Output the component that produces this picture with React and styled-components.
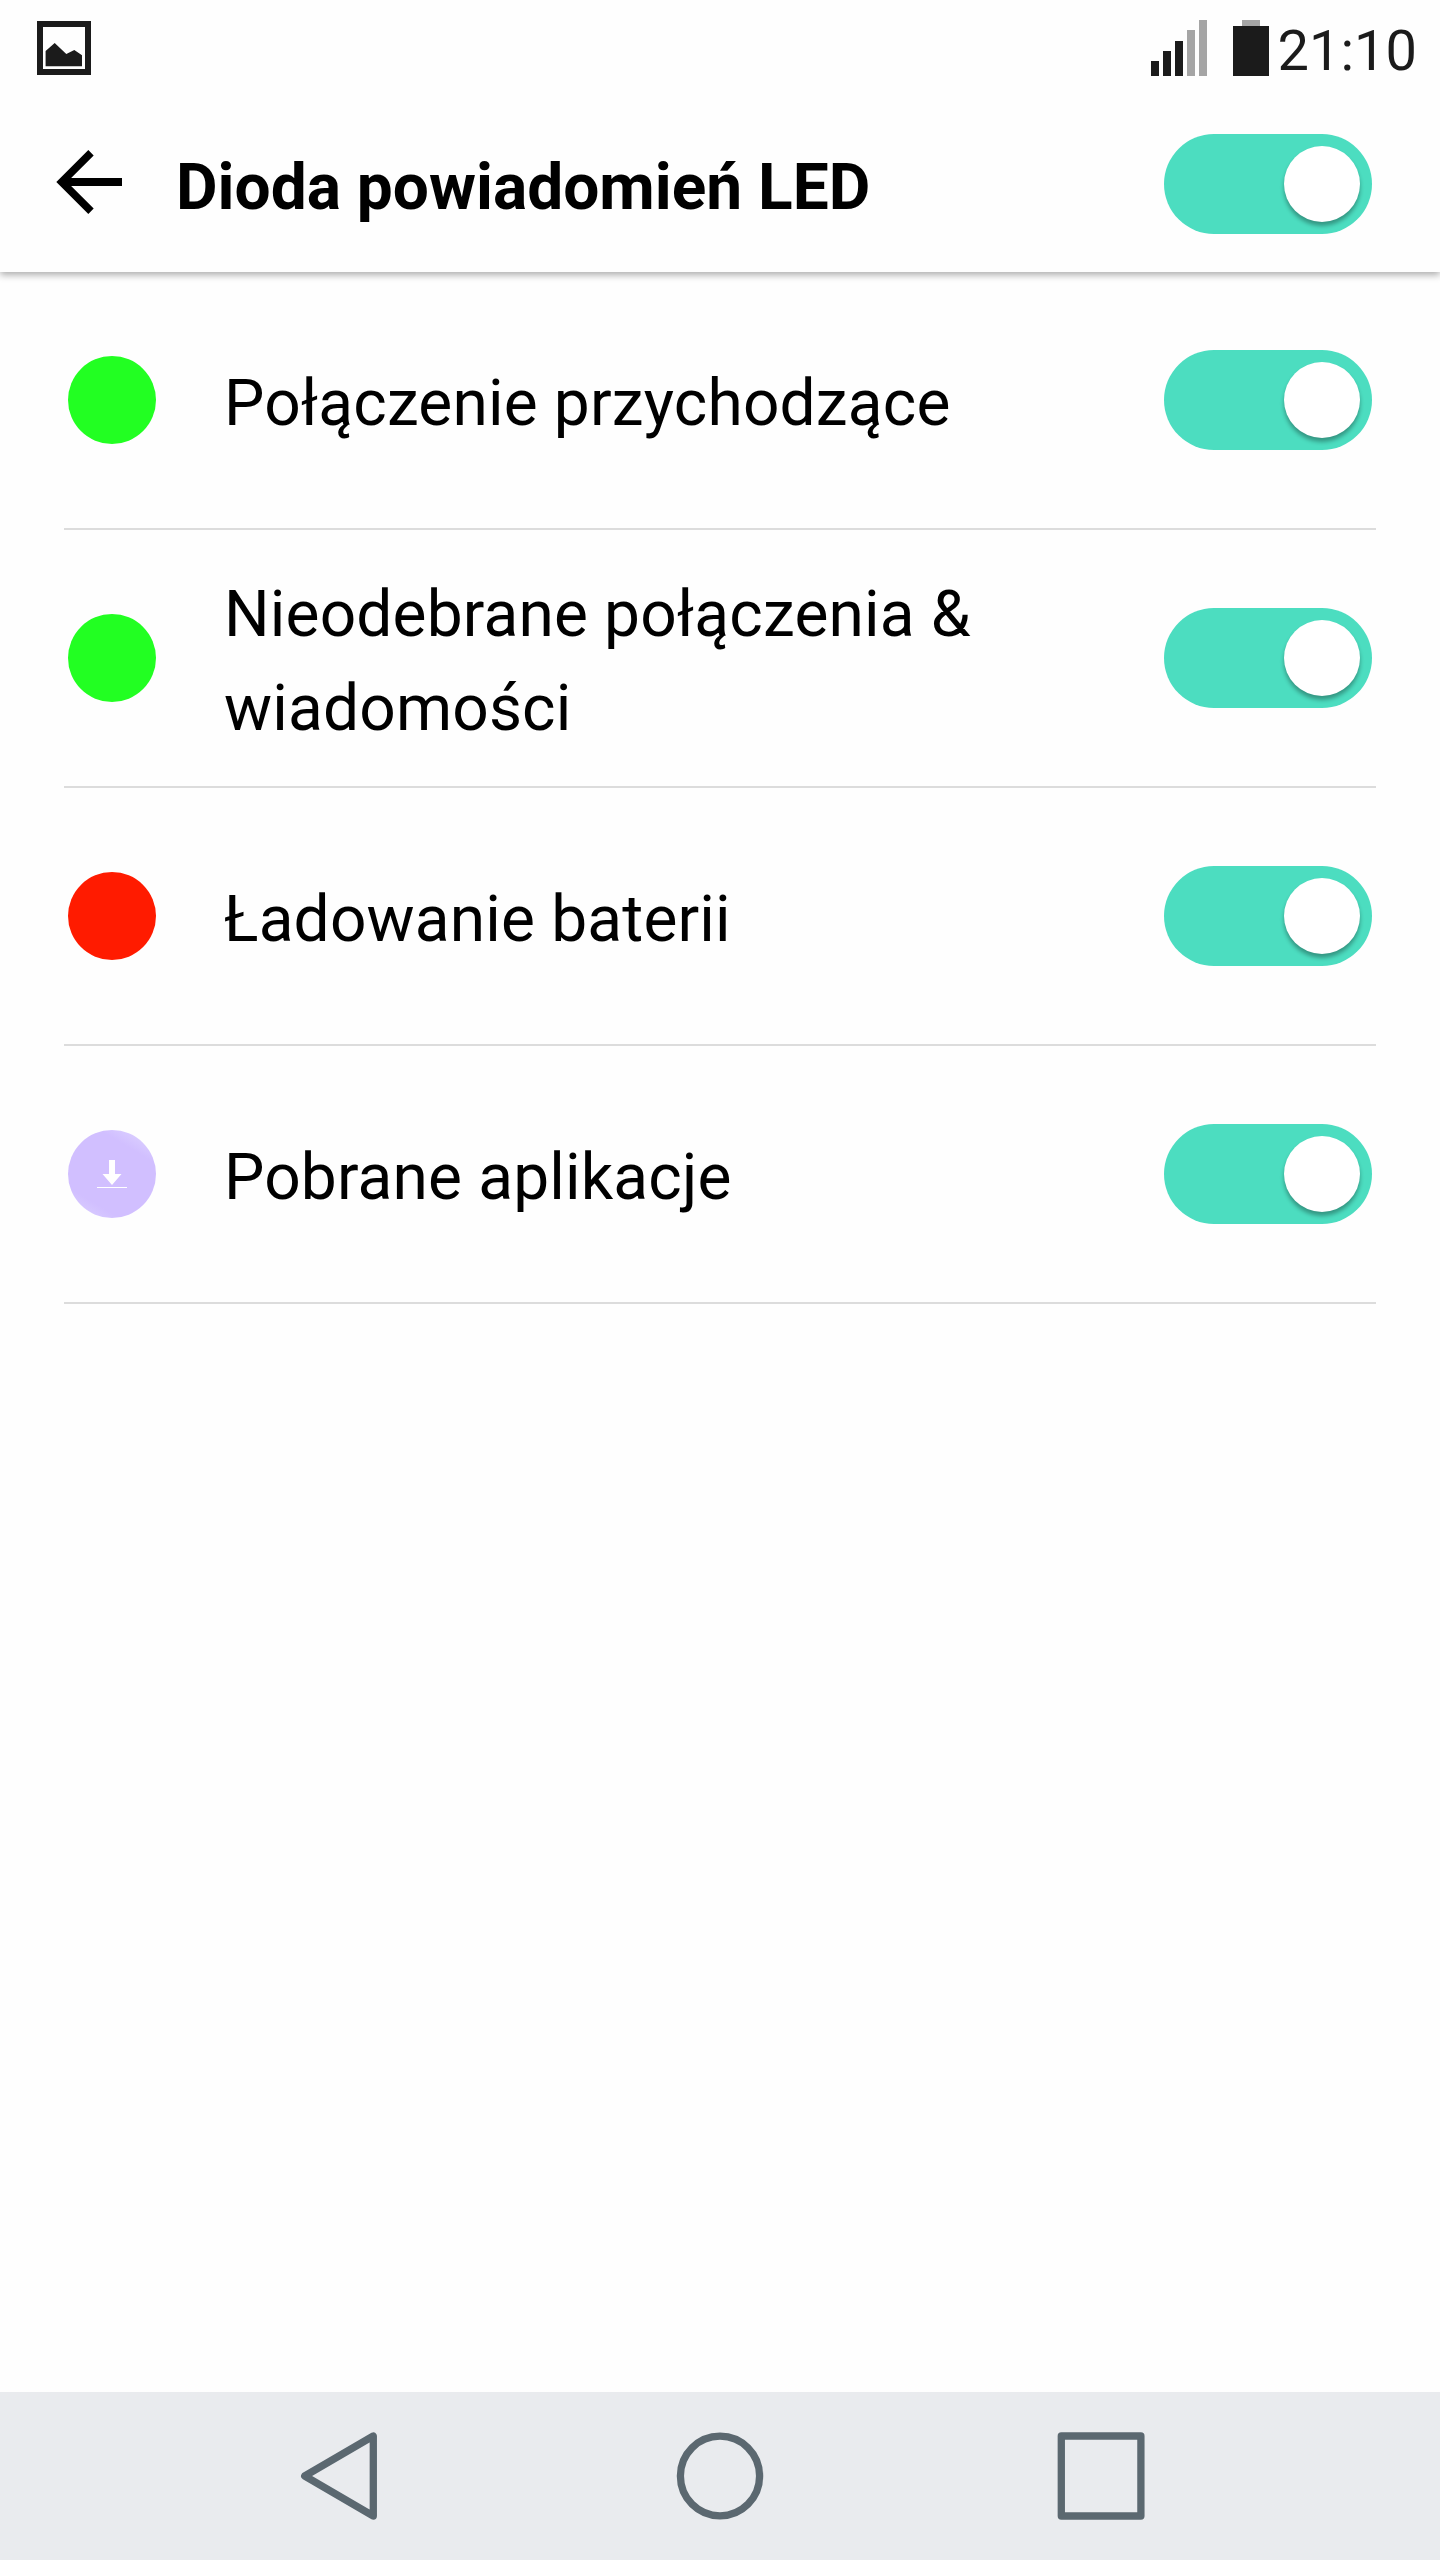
import React from 'react';
import styled, { createGlobalStyle } from 'styled-components';

const GlobalStyle = createGlobalStyle`
  *, *::before, *::after { box-sizing: border-box; }
  body {
    margin: 0;
    background: #fefefe;
    font-family: Roboto, "Noto Sans", sans-serif;
  }
`;

const Screen = styled.div`
  width: 1440px;
  height: 2560px;
  display: flex;
  flex-direction: column;
  overflow: hidden;
  background: #fefefe;
`;

const TopArea = styled.div`
  flex: none;
  height: 272px;
  background: #fefefe;
  box-shadow: 0 3px 7px rgba(0, 0, 0, 0.32);
`;

const StatusBar = styled.div`
  height: 96px;
  padding: 20px 23px 0 37px;
  display: flex;
  align-items: flex-start;
  justify-content: space-between;
`;

const PictureIcon = styled.svg`
  display: block;
  margin-top: 1px;
`;

const StatusRight = styled.div`
  display: flex;
  align-items: flex-start;
`;

const SignalBars = styled.div`
  display: flex;
  align-items: flex-end;
  gap: 4px;
  height: 56px;
`;

const SignalBar = styled.span`
  width: 8px;
  height: ${(p) => p.$height}px;
  background: ${(p) => (p.$active ? '#1b1b1b' : '#a5a5a5')};
`;

const Battery = styled.div`
  width: 36px;
  height: 56px;
  margin-left: 26px;
  display: flex;
  flex-direction: column;
  align-items: center;
`;

const BatteryCap = styled.span`
  width: 18px;
  height: 6px;
  background: #a5a5a5;
`;

const BatteryBody = styled.span`
  width: 36px;
  height: 50px;
  background: #1b1b1b;
`;

const Clock = styled.span`
  width: 148px;
  text-align: right;
  font-size: 56px;
  line-height: 62px;
  color: #1b1b1b;
`;

const Header = styled.header`
  height: 176px;
  padding: 0 68px 0 56px;
  display: flex;
  align-items: center;
`;

const BackIcon = styled.svg`
  display: block;
  flex: none;
  margin-top: -4px;
`;

const Title = styled.h1`
  flex: 1;
  margin: 0;
  padding: 8px 0 0 54px;
  font-size: 64px;
  line-height: 94px;
  font-weight: 700;
  color: #000;
`;

const Track = styled.button`
  flex: none;
  width: 208px;
  height: 100px;
  padding: 0 12px;
  border: 0;
  border-radius: 50px;
  background: #4cddc0;
  display: flex;
  align-items: center;
  justify-content: ${(p) => (p.$on ? 'flex-end' : 'flex-start')};
`;

const Knob = styled.span`
  width: 76px;
  height: 76px;
  border-radius: 50%;
  background: #fff;
  box-shadow: 0 4px 4px rgba(0, 0, 0, 0.32);
`;

const List = styled.ul`
  flex: 1;
  margin: 0;
  padding: 0 64px;
  list-style: none;
`;

const Row = styled.li`
  height: 258px;
  padding: 0 4px;
  display: flex;
  align-items: center;
  border-bottom: 2px solid #dcdcdc;
`;

const Led = styled.span`
  flex: none;
  width: 88px;
  height: 88px;
  margin-top: -1px;
  border-radius: 50%;
  background: ${(p) => p.$fill};
  display: flex;
  align-items: center;
  justify-content: center;
`;

const Label = styled.span`
  flex: 1;
  padding: 8px 120px 0 68px;
  font-size: 64px;
  line-height: 94px;
  letter-spacing: 0.17px;
  color: #000;
`;

const NavBar = styled.nav`
  flex: none;
  height: 168px;
  background: #e9ebee;
  display: grid;
  grid-template-columns: repeat(3, 381px);
  justify-content: center;
  align-items: center;
  justify-items: center;
`;

const NavIcon = styled.svg`
  display: block;
  fill: none;
  stroke: #5b6870;
  stroke-width: 7.3;
  stroke-linejoin: round;
`;

function Toggle({ label }) {
  return (
    <Track type="button" role="switch" aria-checked="true" aria-label={label} $on>
      <Knob />
    </Track>
  );
}

const SIGNAL = [
  { height: 15, active: true },
  { height: 25, active: true },
  { height: 35, active: true },
  { height: 46, active: false },
  { height: 56, active: false },
];

const LILAC =
  'linear-gradient(31deg, #e2d8ff 0%, #d7c9ff 12%, #d1bfff 22%, #d1bfff 76%, #d9ccff 88%, #e6deff 100%)';

const ITEMS = [
  { label: 'Połączenie przychodzące', fill: '#22ff22' },
  { label: 'Nieodebrane połączenia & wiadomości', fill: '#22ff22' },
  { label: 'Ładowanie baterii', fill: '#ff1b00' },
  { label: 'Pobrane aplikacje', fill: LILAC, download: true },
];

export default function App() {
  return (
    <>
      <GlobalStyle />
      <Screen>
        <TopArea>
          <StatusBar>
            <PictureIcon width="54" height="54" viewBox="0 0 54 54">
              <rect x="3" y="3" width="48" height="48" fill="none" stroke="#1b1b1b" strokeWidth="6" />
              <path d="M8.6 30 17.7 22 29.3 33 37.3 29 45 34.3V45.3H8.6Z" fill="#1b1b1b" />
            </PictureIcon>
            <StatusRight>
              <SignalBars>
                {SIGNAL.map((bar) => (
                  <SignalBar key={bar.height} $height={bar.height} $active={bar.active} />
                ))}
              </SignalBars>
              <Battery>
                <BatteryCap />
                <BatteryBody />
              </Battery>
              <Clock>21:10</Clock>
            </StatusRight>
          </StatusBar>
          <Header>
            <BackIcon width="66" height="64" viewBox="0 0 66 64" fill="none" stroke="#000">
              <path d="M35 2.8 5.7 32 35 61.2" strokeWidth="7.6" />
              <path d="M8 32H66" strokeWidth="8" />
            </BackIcon>
            <Title>Dioda powiadomień LED</Title>
            <Toggle label="Dioda powiadomień LED" />
          </Header>
        </TopArea>
        <List>
          {ITEMS.map((item) => (
            <Row key={item.label}>
              <Led $fill={item.fill}>
                {item.download && (
                  <svg width="30" height="28" viewBox="0 0 30 28" fill="#fff">
                    <path d="M12 0H18V14H24.5L15 25 5.5 14H12Z" />
                    <rect x="0" y="27" width="30" height="1" />
                  </svg>
                )}
              </Led>
              <Label>{item.label}</Label>
              <Toggle label={item.label} />
            </Row>
          ))}
        </List>
        <NavBar>
          <NavIcon width="88" height="88" viewBox="0 0 88 88">
            <path d="M9.7 44 78.3 4V84Z" />
          </NavIcon>
          <NavIcon width="88" height="88" viewBox="0 0 88 88">
            <ellipse cx="44" cy="44" rx="39.6" ry="39.8" />
          </NavIcon>
          <NavIcon width="88" height="88" viewBox="0 0 88 88">
            <rect x="4.3" y="4" width="79.6" height="80" />
          </NavIcon>
        </NavBar>
      </Screen>
    </>
  );
}
